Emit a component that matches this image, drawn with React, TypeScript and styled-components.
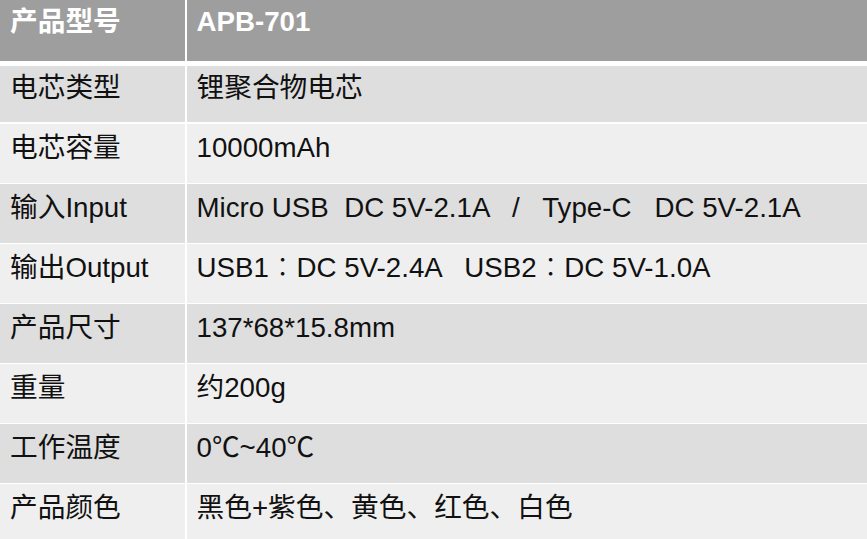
import React from "react";
import styled, { createGlobalStyle } from "styled-components";

interface spec {
  label : string,
  value : string
}

const specs : spec[] = [
  { label: '电芯类型', value: '锂聚合物电芯' },
  { label: '电芯容量', value: '10000mAh' },
  { label: '输入Input', value: 'Micro USB  DC 5V-2.1A   /   Type-C   DC 5V-2.1A' },
  { label: '输出Output', value: 'USB1：DC 5V-2.4A   USB2：DC 5V-1.0A' },
  { label: '产品尺寸', value: '137*68*15.8mm' },
  { label: '重量', value: '约200g' },
  { label: '工作温度', value: '0℃~40℃' },
  { label: '产品颜色', value: '黑色+紫色、黄色、红色、白色' },
]

// the fullwidth colon sits centred in the reference, so it gets its own span
const renderValue = (value : string) => {
  const parts = value.split('：')
  return parts.map((part, i) => (
    <React.Fragment key={i}>
      {i > 0 && <Colon>：</Colon>}
      {part}
    </React.Fragment>
  ))
}

export default function App () {
  return (
    <>
      <GlobalStyle />
      <Table>
        <HeadRow>
          <HeadCell>产品型号</HeadCell>
          <HeadCell>APB-701</HeadCell>
        </HeadRow>
        {specs.map((item, i) => (
          <Row key={item.label} shade={i % 2 === 0 ? '#dedede' : '#efefef'} first={i === 0}>
            <Cell>{item.label}</Cell>
            <Cell>{renderValue(item.value)}</Cell>
          </Row>
        ))}
      </Table>
    </>
  )
}

const GlobalStyle = createGlobalStyle`
  html, body {
    margin: 0;
    padding: 0;
    background: #ffffff;
  }
  body {
    font-family: "Liberation Sans", "Noto Sans CJK SC", sans-serif;
  }
`

const Table = styled.div`
  width: 867px;
  height: 539px;
  overflow: hidden;
  background: #ffffff;
`

const HeadRow = styled.div`
  display: grid;
  grid-template-columns: 185px 1fr;
  column-gap: 1.5px;
  height: 61px;
  margin-bottom: 5px;
`

const HeadCell = styled.div`
  background-color: #9e9e9e;
  color: #ffffff;
  font-size: 27.7px;
  font-weight: 700;
  line-height: 32px;
  padding: 6px 0 0 10px;
  white-space: pre;

  & + & {
    padding-left: 10px;
  }
`

const Row = styled.div<{shade : string, first : boolean}>`
  display: grid;
  grid-template-columns: 185px 1fr;
  column-gap: 1.5px;
  height: ${props => props.first ? '56px' : '59px'};
  margin-bottom: ${props => props.first ? '1.5px' : '1px'};

  & > div {
    background-color: ${props => props.shade};
    padding-top: ${props => props.first ? '5.5px' : '8px'};
  }
`

const Cell = styled.div`
  color: #111111;
  font-size: 27.7px;
  line-height: 32px;
  padding-left: 10px;
  white-space: pre;

  & + & {
    padding-left: 10px;
  }
`

const Colon = styled.span`
  font-family: "Noto Sans CJK TC", "Noto Sans CJK SC", sans-serif;
  font-weight: 300;
  line-height: 0;
`
